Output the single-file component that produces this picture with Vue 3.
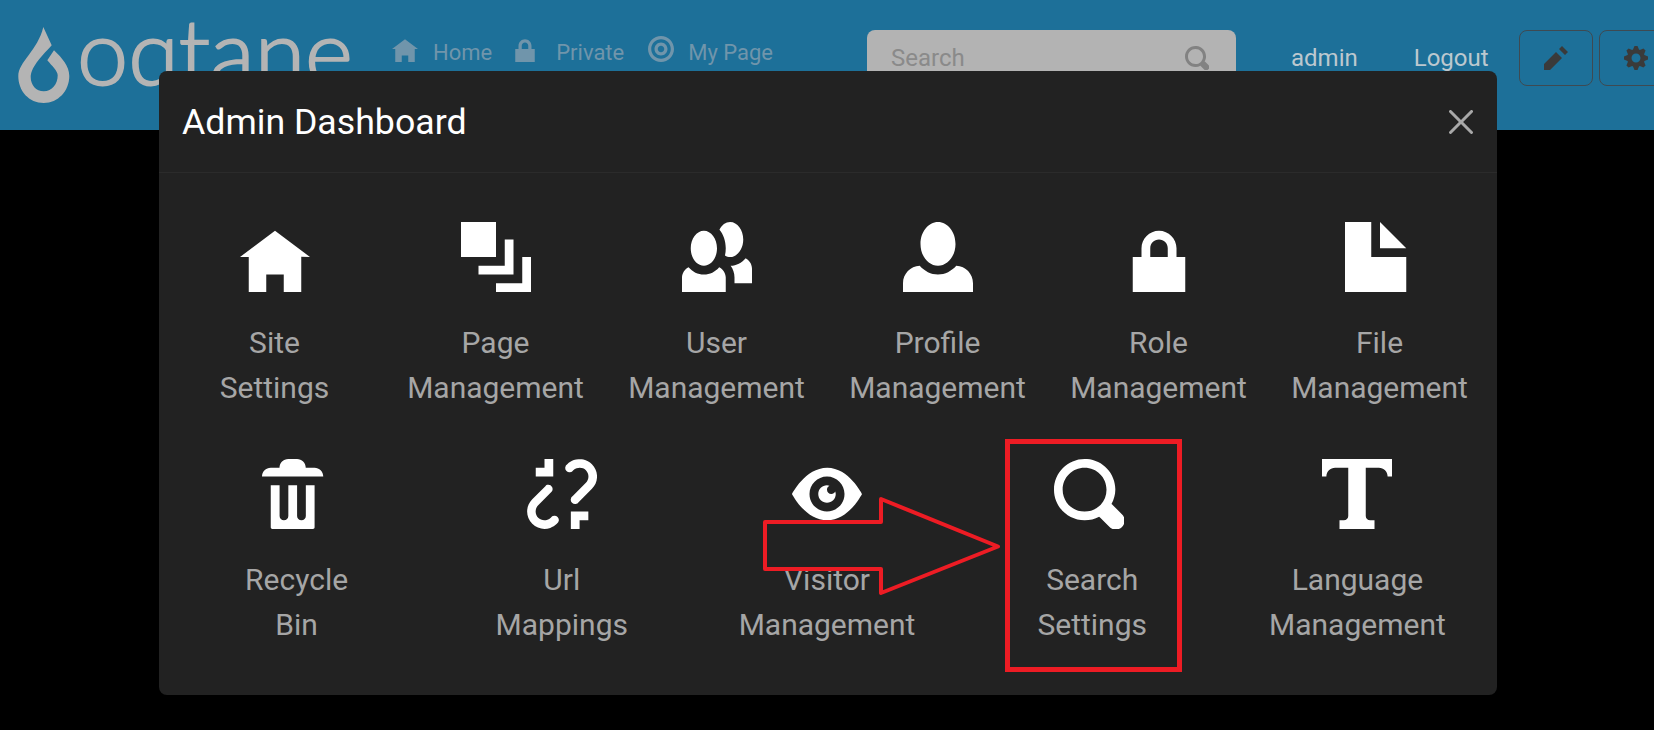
<script setup>
const nav = [
  { label: "Home", icon: "M4 0l-4 3h1v4h2v-2h2v2h2v-4.03l1 .03-4-3z", move: "translate(0 1)" },
  { label: "Private", icon: "M3 0c-1.1 0-2 .9-2 2v1h-1v4h6v-4h-1v-1c0-1.1-.9-2-2-2zm0 1c.56 0 1 .44 1 1v1h-2v-1c0-.56.44-1 1-1z", move: "translate(1 1)" },
  { label: "My Page", icon: "M4 0c-2.2 0-4 1.8-4 4s1.8 4 4 4 4-1.8 4-4-1.8-4-4-4zm0 1c1.66 0 3 1.34 3 3s-1.34 3-3 3-3-1.34-3-3 1.34-3 3-3zm0 1c-1.1 0-2 .9-2 2s.9 2 2 2 2-.9 2-2-.9-2-2-2zm0 1c.56 0 1 .44 1 1s-.44 1-1 1-1-.44-1-1 .44-1 1-1z", move: "" },
];

const searchIcon = "M3.5 0c-1.93 0-3.5 1.57-3.5 3.5s1.57 3.5 3.5 3.5c.59 0 1.17-.14 1.66-.41a1 1 0 0 0 .13.13l1 1a1.02 1.02 0 1 0 1.44-1.44l-1-1a1 1 0 0 0-.16-.13c.27-.49.44-1.06.44-1.66 0-1.93-1.57-3.5-3.5-3.5zm0 1c1.39 0 2.5 1.11 2.5 2.5 0 .66-.24 1.27-.66 1.72-.01.01-.02.02-.03.03a1 1 0 0 0-.13.13c-.44.4-1.04.63-1.69.63-1.39 0-2.5-1.11-2.5-2.5s1.11-2.5 2.5-2.5z";

const rowOne = [
  { lines: ["Site", "Settings"], icon: "M4 0l-4 3h1v4h2v-2h2v2h2v-4.03l1 .03-4-3z", move: "translate(0 1)" },
  { lines: ["Page", "Management"], icon: "M0 0v4h4v-4h-4zm5 2v3h-3v1h4v-4h-1zm2 2v3h-3v1h4v-4h-1z", move: "" },
  { lines: ["User", "Management"], icon: "M5.5 0c-.51 0-.95.35-1.22.88.45.54.72 1.28.72 2.13 0 .29-.03.55-.09.81.19.11.38.19.59.19.83 0 1.5-.9 1.5-2s-.67-2-1.5-2zm-3 1c-.83 0-1.5.9-1.5 2s.67 2 1.5 2 1.5-.9 1.5-2-.67-2-1.5-2zm4.75 3.16c-.43.51-1.02.82-1.69.84.27.38.44.84.44 1.34v.66h2v-1.66c0-.52-.31-.97-.75-1.19zm-6.5 1c-.44.22-.75.67-.75 1.19v1.66h5v-1.66c0-.52-.31-.97-.75-1.19-.45.53-1.06.84-1.75.84s-1.3-.32-1.75-.84z", move: "" },
  { lines: ["Profile", "Management"], icon: "M4 0c-1.1 0-2 1.12-2 2.5s.9 2.5 2 2.5 2-1.12 2-2.5-.9-2.5-2-2.5zm-2.09 5c-1.06.05-1.91.92-1.91 2v1h8v-1c0-1.08-.84-1.95-1.91-2-.54.61-1.28 1-2.09 1-.81 0-1.55-.39-2.09-1z", move: "" },
  { lines: ["Role", "Management"], icon: "M3 0c-1.1 0-2 .9-2 2v1h-1v4h6v-4h-1v-1c0-1.1-.9-2-2-2zm0 1c.56 0 1 .44 1 1v1h-2v-1c0-.56.44-1 1-1z", move: "translate(1 1)" },
  { lines: ["File", "Management"], icon: "M0 0v8h7v-4h-4v-4h-3zm4 0v3h3l-3-3z", move: "" },
];

const rowTwo = [
  { lines: ["Recycle", "Bin"], icon: "M3 0c-.55 0-1 .45-1 1h-1c-.55 0-1 .45-1 1h7c0-.55-.45-1-1-1h-1c0-.55-.45-1-1-1h-1zm-2 3v4.81c0 .11.08.19.19.19h4.63c.11 0 .19-.08.19-.19v-4.81h-1v3.5c0 .28-.22.5-.5.5s-.5-.22-.5-.5v-3.5h-1v3.5c0 .28-.22.5-.5.5s-.5-.22-.5-.5v-3.5h-1z", move: "" },
  { lines: ["Url", "Mappings"], icon: "M2 0v1h-1v1h2v-2h-1zm3.88.03c-.18.01-.36.03-.53.09-.27.1-.53.25-.75.47a.5.5 0 1 0 .69.69c.11-.11.24-.17.38-.22.35-.12.78-.07 1.06.22.39.39.39 1.04 0 1.44l-1.5 1.5a.5.5 0 1 0 .69.69l1.5-1.5c.78-.78.78-2.04 0-2.81-.28-.28-.61-.45-.97-.53-.18-.04-.38-.04-.56-.03zm-3.59 2.91a.5.5 0 0 0-.19.16l-1.5 1.5c-.78.78-.78 2.04 0 2.81.56.56 1.36.72 2.06.47.27-.1.53-.25.75-.47a.5.5 0 1 0-.69-.69c-.11.11-.24.17-.38.22-.35.12-.78.07-1.06-.22-.39-.39-.39-1.04 0-1.44l1.5-1.5a.5.5 0 0 0-.44-.84.5.5 0 0 0-.06 0zm2.72 3.06v2h1v-1h1v-1h-2z", move: "" },
  { lines: ["Visitor", "Management"], icon: "M4.03 0c-2.53 0-4.03 3-4.03 3s1.5 3 4.03 3c2.47 0 3.97-3 3.97-3s-1.5-3-3.97-3zm-.03 1c1.11 0 2 .9 2 2 0 1.11-.89 2-2 2-1.1 0-2-.89-2-2 0-1.1.9-2 2-2zm0 1c-.55 0-1 .45-1 1s.45 1 1 1 1-.45 1-1c0-.1-.04-.19-.06-.28-.08.16-.24.28-.44.28-.28 0-.5-.22-.5-.5 0-.2.12-.36.28-.44-.09-.03-.18-.06-.28-.06z", move: "translate(0 1)" },
  { lines: ["Search", "Settings"], icon: searchIcon, move: "", nudge: true },
  { lines: ["Language", "Management"], icon: "M0 0v2h.5c0-.55.45-1 1-1h1.5v5.5c0 .28-.22.5-.5.5h-.5v1h4v-1h-.5c-.28 0-.5-.22-.5-.5v-5.5h1.5c.55 0 1 .45 1 1h.5v-2h-8z", move: "" },
];

const rows = [rowOne, rowTwo];
</script>

<template>
  <div class="page">
    <header class="topbar">
      <svg class="logo" width="360" height="130" viewBox="0 0 360 130">
        <path d="M43.300 27 L51.700 45.300 C44 54 31 66 30.700 77 C30.700 85 36 91.300 43.800 91.300 C52 91.300 57.700 84 57.700 75.300 C57.700 71 52 66 47.300 60.300 L54 50.300 C62 58 69.300 66 69.300 76 C69.300 91 58 103 43.800 103 C29 103 18.300 91 18.300 76 C18.300 62 38 50 43.300 27 Z" fill="#b4b4b4" />
        <text class="wordmark" x="77" y="85" textLength="276" lengthAdjust="spacingAndGlyphs">oqtane</text>
      </svg>

      <nav class="menu">
        <a v-for="item in nav" :key="item.label" class="menu-link">
          <svg class="menu-icon" viewBox="0 0 8 8"><path :d="item.icon" :transform="item.move" /></svg>
          <span>{{ item.label }}</span>
        </a>
      </nav>

      <div class="search">
        <span class="search-text">Search</span>
        <svg class="search-icon" viewBox="0 0 8 8"><path :d="searchIcon" /></svg>
      </div>

      <a class="user-link admin">admin</a>
      <a class="user-link logout">Logout</a>

      <button class="tool">
        <svg viewBox="0 0 8 8"><path d="M6 0l-1 1 2 2 1-1-2-2zm-2 2l-4 4v2h2l4-4-2-2z" /></svg>
      </button>
      <button class="tool">
        <svg viewBox="0 0 8 8"><path d="M3.500 0l-.5 1.190c-.1.03-.19.08-.28.13l-1.190-.5-.72.72.5 1.190c-.05.1-.09.18-.13.28l-1.190.5v1l1.190.5c.04.1.08.18.13.28l-.5 1.190.72.72 1.190-.5c.09.04.18.09.28.13l.5 1.190h1l.5-1.190c.09-.04.19-.08.28-.13l1.190.5.72-.72-.5-1.190c.04-.09.09-.19.13-.28l1.190-.5v-1l-1.190-.5c-.03-.09-.08-.19-.13-.28l.5-1.190-.72-.72-1.190.5c-.09-.04-.19-.09-.28-.13l-.5-1.190h-1zm.5 2.500c.83 0 1.500.67 1.500 1.500s-.67 1.500-1.500 1.500-1.500-.67-1.500-1.500.67-1.500 1.500-1.500z" /></svg>
      </button>
    </header>

    <section class="dialog">
      <div class="dialog-head">
        <h5>Admin Dashboard</h5>
        <svg class="close" viewBox="0 0 16 16"><path d="M.293.293a1 1 0 0 1 1.414 0L8 6.586 14.293.293a1 1 0 1 1 1.414 1.414L9.414 8l6.293 6.293a1 1 0 0 1-1.414 1.414L8 9.414l-6.293 6.293a1 1 0 0 1-1.414-1.414L6.586 8 .293 1.707a1 1 0 0 1 0-1.414z" /></svg>
      </div>
      <div class="dialog-body">
        <div v-for="(row, r) in rows" :key="r" class="row">
          <div v-for="tile in row" :key="tile.lines[0]" class="tile">
            <svg class="tile-icon" :class="{ nudge: tile.nudge }" viewBox="0 0 8 8"><path :d="tile.icon" :transform="tile.move" /></svg>
            <div class="tile-label">
              <div v-for="line in tile.lines" :key="line">{{ line }}</div>
            </div>
          </div>
        </div>
      </div>
    </section>

    <!-- hand drawn annotation on top of the screenshot -->
    <svg class="marks" width="1654" height="730" viewBox="0 0 1654 730">
      <rect x="1007.500" y="441.500" width="172" height="228" />
      <path d="M765 522H881V499L998 546.500L881 593V569H765Z" />
    </svg>
  </div>
</template>

<style scoped>
.page {
  position: relative;
  height: 730px;
  overflow: hidden;
  background: #000;
  font-family: Roboto, "Liberation Sans", sans-serif;
}

.topbar {
  display: flex;
  align-items: flex-start;
  height: 130px;
  background: #1d7099;
}

.logo {
  flex: none;
}

.wordmark {
  font-family: Lato, sans-serif;
  font-weight: 300;
  font-size: 90px;
  fill: #b4b4b4;
  stroke: #b4b4b4;
  stroke-width: 2;
}

.menu {
  display: flex;
  flex: none;
  gap: 20px;
  margin: 36px 0 0 32px;
  width: 475px;
}

.menu-link {
  display: flex;
  align-items: flex-start;
  gap: 15px;
  height: 26px;
  font-size: 22px;
  line-height: 34px;
  color: #7095ab;
}

.menu-link:nth-child(2) .menu-icon {
  margin-right: 3px;
}

.menu-link:nth-child(3) {
  gap: 14px;
  margin-left: 4px;
}

.menu-icon {
  width: 26px;
  height: 26px;
  fill: #7095ab;
}

.search {
  display: flex;
  flex: none;
  justify-content: space-between;
  align-items: center;
  box-sizing: border-box;
  width: 369px;
  height: 56px;
  margin-top: 30px;
  padding: 0 27px 0 24px;
  border-radius: 8px;
  background: #b3b3b3;
}

.search-text {
  font-size: 24px;
  color: #8a8a8a;
}

.search-icon {
  width: 24px;
  height: 24px;
  fill: #828282;
}

.user-link {
  margin-top: 41px;
  font-size: 24px;
  line-height: 34px;
  color: #bcc8cf;
}

.admin {
  margin-left: 55px;
}

.logout {
  margin-left: 56px;
}

.tool {
  display: flex;
  flex: none;
  align-items: center;
  justify-content: center;
  box-sizing: border-box;
  width: 74px;
  height: 56px;
  margin: 30px 0 0 6px;
  padding: 0;
  border: 1px solid #3e4a52;
  border-radius: 8px;
  background: none;
}

.logout + .tool {
  margin-left: 30px;
}

.tool svg {
  width: 24px;
  height: 24px;
  fill: #3a3a3a;
}

.dialog {
  position: absolute;
  top: 71px;
  left: 159px;
  width: 1338px;
  height: 624px;
  border-radius: 8px;
  background: #222;
}

.dialog-head {
  display: flex;
  align-items: center;
  justify-content: space-between;
  box-sizing: border-box;
  height: 102px;
  padding: 0 24px 0 23px;
  border-bottom: 1px solid #2b2b2b;
}

.dialog-head h5 {
  margin: 0;
  font-size: 35.700px;
  font-weight: 400;
  color: #fff;
}

.close {
  width: 24px;
  height: 24px;
  fill: #a8a8a8;
}

.dialog-body {
  display: flex;
  flex-direction: column;
  gap: 49px;
  padding: 49px 7px 0 5px;
}

.row {
  display: flex;
}

.tile {
  display: flex;
  flex: 1;
  flex-direction: column;
  align-items: center;
}

.tile-icon {
  width: 70px;
  height: 70px;
  fill: #fff;
}

.tile-icon.nudge {
  margin-left: -7px;
}

.tile-label {
  margin-top: 28px;
  font-size: 30px;
  line-height: 45px;
  text-align: center;
  color: #a6a6a6;
}

.marks {
  position: absolute;
  top: 0;
  left: 0;
  pointer-events: none;
}

.marks rect,
.marks path {
  fill: none;
  stroke: #ed1c24;
}

.marks rect {
  stroke-width: 5;
}

.marks path {
  stroke-width: 4;
  stroke-linejoin: round;
}
</style>

<style>
body {
  background: #000;
}
</style>
